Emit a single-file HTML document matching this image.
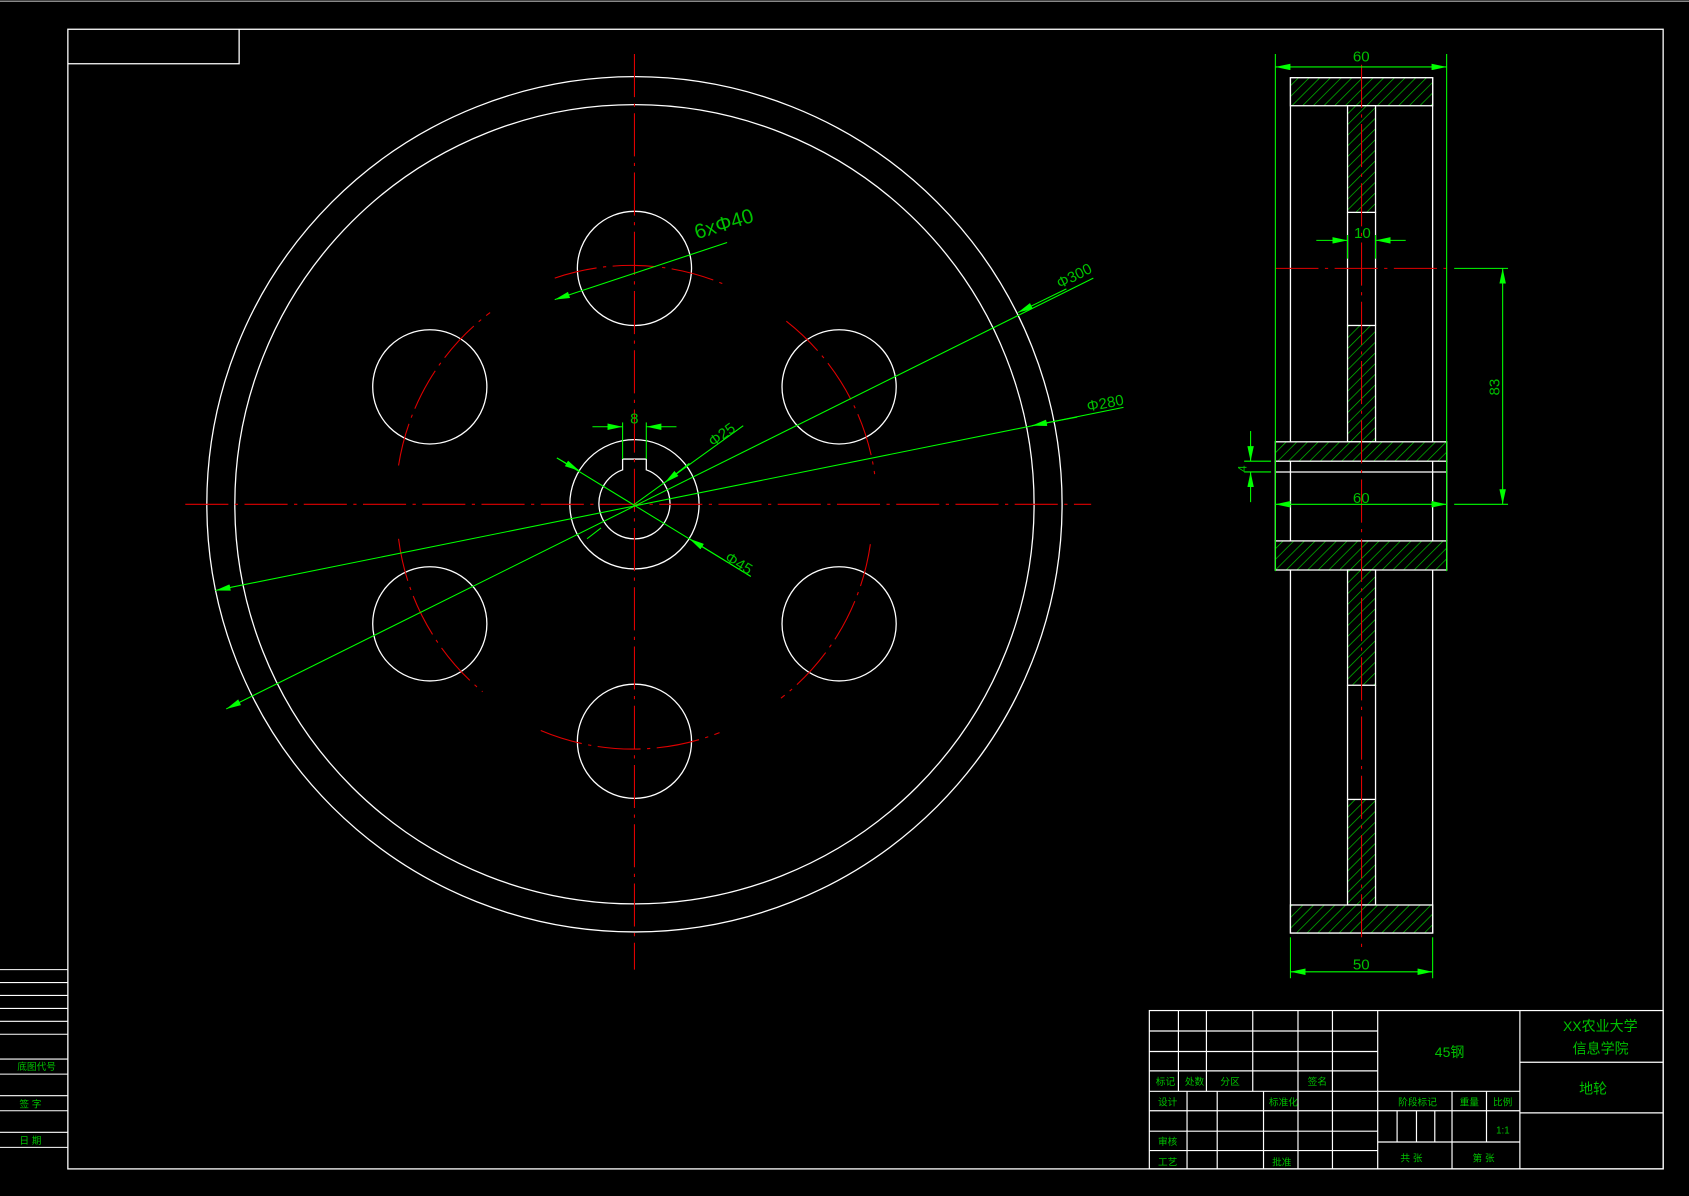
<!DOCTYPE html>
<html><head><meta charset="utf-8"><style>
html,body{margin:0;padding:0;background:#000;overflow:hidden}
svg{display:block}
text{font-family:"Liberation Sans","Noto Sans CJK SC",sans-serif;fill:#00c000}
</style></head><body>
<svg width="1689" height="1196" viewBox="0 0 1568 1110" xmlns="http://www.w3.org/2000/svg">
<defs>
<pattern id="h" patternUnits="userSpaceOnUse" width="7" height="7" patternTransform="rotate(45)">
<rect width="7" height="7" fill="#000"/><line x1="0" y1="0" x2="0" y2="7" stroke="#00c000" stroke-width="1.3"/>
</pattern>
<marker id="a" markerWidth="14" markerHeight="6" refX="14" refY="3" orient="auto-start-reverse" markerUnits="userSpaceOnUse"><path d="M0,0 L14,3 L0,6z" fill="#00ff00"/></marker>
</defs>
<rect x="0" y="0" width="1568" height="1110" fill="#000"/>
<line x1="0" y1="1" x2="1568" y2="1" stroke="#888" stroke-width="1.5"/>
<g stroke="#fff" fill="none" stroke-width="1.2">
<rect x="63" y="27" width="1481" height="1058"/>
<polyline points="63,59 222,59 222,27"/>
<g stroke-width="1">
<line x1="0" y1="900" x2="63" y2="900"/><line x1="0" y1="912" x2="63" y2="912"/><line x1="0" y1="924" x2="63" y2="924"/><line x1="0" y1="936" x2="63" y2="936"/><line x1="0" y1="948" x2="63" y2="948"/><line x1="0" y1="960" x2="63" y2="960"/>
<line x1="0" y1="983" x2="63" y2="983"/><line x1="0" y1="997" x2="63" y2="997"/><line x1="0" y1="1017" x2="63" y2="1017"/><line x1="0" y1="1031" x2="63" y2="1031"/><line x1="0" y1="1051" x2="63" y2="1051"/><line x1="0" y1="1065" x2="63" y2="1065"/>
</g>
<circle cx="589" cy="468" r="397"/>
<circle cx="589" cy="468" r="371"/>
<circle cx="589" cy="249" r="53"/><circle cx="589" cy="688" r="53"/>
<circle cx="399" cy="359" r="53"/><circle cx="779" cy="359" r="53"/>
<circle cx="399" cy="579" r="53"/><circle cx="779" cy="579" r="53"/>
<circle cx="589" cy="468" r="60"/>
<path d="M578,436 A33,33 0 1 0 600,436 L600,426 L578,426 Z"/>
<rect x="1198" y="72" width="132" height="794"/>
</g>
<g fill="url(#h)" stroke="#fff" stroke-width="1.2">
<rect x="1198" y="72" width="132" height="26"/>
<rect x="1251" y="98" width="26" height="99"/>
<rect x="1251" y="302" width="26" height="108"/>
<rect x="1184" y="410" width="159" height="18"/>
<rect x="1184" y="502" width="159" height="27"/>
<rect x="1251" y="529" width="26" height="107"/>
<rect x="1251" y="742" width="26" height="98"/>
<rect x="1198" y="840" width="132" height="26"/>
</g>
<g stroke="#fff" fill="none" stroke-width="1.2">
<line x1="1251" y1="197" x2="1251" y2="302"/><line x1="1277" y1="197" x2="1277" y2="302"/>
<line x1="1251" y1="636" x2="1251" y2="742"/><line x1="1277" y1="636" x2="1277" y2="742"/>
<line x1="1184" y1="438" x2="1343" y2="438"/>
<line x1="1184" y1="428" x2="1184" y2="502"/><line x1="1343" y1="428" x2="1343" y2="502"/>
</g>
<g stroke="#e00000" fill="none" stroke-width="1" stroke-dasharray="40,6,3,6">
<line x1="172" y1="468" x2="1013" y2="468"/>
<line x1="589" y1="50" x2="589" y2="900"/>
<line x1="1264" y1="60" x2="1264" y2="880"/>
<line x1="1184" y1="249" x2="1343" y2="249"/>
<path d="M515,258 A220,220 0 0 1 675,265"/>
<path d="M502,678 A220,220 0 0 0 668,680"/>
<path d="M370,432 A220,220 0 0 1 455,290"/>
<path d="M730,298 A220,220 0 0 1 812,440"/>
<path d="M370,500 A220,220 0 0 0 448,642"/>
<path d="M808,505 A220,220 0 0 1 725,648"/>
</g>
<g stroke="#00ff00" fill="none" stroke-width="1">
<line x1="515" y1="278" x2="675" y2="225" marker-start="url(#a)"/>
<line x1="210" y1="658" x2="1015" y2="258" marker-start="url(#a)"/>
<line x1="990" y1="268" x2="945" y2="290" marker-end="url(#a)"/>
<line x1="200" y1="548" x2="1043" y2="378" marker-start="url(#a)"/>
<line x1="1000" y1="387" x2="958" y2="395" marker-end="url(#a)"/>
<line x1="589" y1="468" x2="690" y2="395"/>
<line x1="640" y1="430" x2="617" y2="448" marker-end="url(#a)"/>
<line x1="558" y1="490" x2="545" y2="500"/>
<line x1="517" y1="425" x2="697" y2="535"/>
<line x1="517" y1="425" x2="538" y2="437" marker-end="url(#a)"/>
<line x1="697" y1="535" x2="640" y2="500" marker-end="url(#a)"/>
<line x1="578" y1="392" x2="578" y2="426"/><line x1="600" y1="392" x2="600" y2="426"/>
<line x1="550" y1="396" x2="578" y2="396" marker-end="url(#a)"/><line x1="628" y1="396" x2="600" y2="396" marker-end="url(#a)"/>
<line x1="1184" y1="50" x2="1184" y2="530"/><line x1="1343" y1="50" x2="1343" y2="530"/>
<line x1="1184" y1="62" x2="1343" y2="62" marker-start="url(#a)" marker-end="url(#a)"/>
<line x1="1184" y1="468" x2="1343" y2="468" marker-start="url(#a)" marker-end="url(#a)"/>
<line x1="1222" y1="223" x2="1251" y2="223" marker-end="url(#a)"/><line x1="1305" y1="223" x2="1277" y2="223" marker-end="url(#a)"/>
<line x1="1251" y1="218" x2="1251" y2="240"/><line x1="1277" y1="218" x2="1277" y2="240"/>
<line x1="1350" y1="249" x2="1400" y2="249"/><line x1="1350" y1="468" x2="1400" y2="468"/>
<line x1="1395" y1="249" x2="1395" y2="468" marker-start="url(#a)" marker-end="url(#a)"/>
<line x1="1155" y1="428" x2="1180" y2="428"/><line x1="1155" y1="438" x2="1180" y2="438"/>
<line x1="1161" y1="400" x2="1161" y2="428" marker-end="url(#a)"/><line x1="1161" y1="466" x2="1161" y2="438" marker-end="url(#a)"/>
<line x1="1198" y1="870" x2="1198" y2="908"/><line x1="1330" y1="870" x2="1330" y2="908"/>
<line x1="1198" y1="902" x2="1330" y2="902" marker-start="url(#a)" marker-end="url(#a)"/>
</g>
<g font-size="14">
<text x="647" y="222" font-size="19" transform="rotate(-17 647 222)">6xΦ40</text>
<text x="984" y="268" transform="rotate(-27 984 268)">Φ300</text>
<text x="1010" y="382" transform="rotate(-11 1010 382)">Φ280</text>
<text x="662" y="415" transform="rotate(-36 662 415)">Φ25</text>
<text x="672" y="520" transform="rotate(31 672 520)">Φ45</text>
<text x="585" y="393">8</text>
<text x="1256" y="57">60</text>
<text x="1257" y="221">10</text>
<text x="1256" y="467">60</text>
<text x="1256" y="900">50</text>
<text x="1392" y="367" transform="rotate(-90 1392 367)">83</text>
<text x="1157" y="438" font-size="11" transform="rotate(-90 1157 438)">4</text>
</g>
<g stroke="#fff" fill="none" stroke-width="1.1">
<rect x="1067" y="938" width="477" height="147"/>
<line x1="1067" y1="957" x2="1279" y2="957"/><line x1="1067" y1="976" x2="1279" y2="976"/><line x1="1067" y1="994" x2="1279" y2="994"/>
<line x1="1067" y1="1013" x2="1411" y2="1013"/><line x1="1067" y1="1031" x2="1279" y2="1031"/><line x1="1067" y1="1050" x2="1279" y2="1050"/><line x1="1067" y1="1068" x2="1279" y2="1068"/>
<line x1="1094" y1="938" x2="1094" y2="1013"/><line x1="1120" y1="938" x2="1120" y2="1013"/><line x1="1163" y1="938" x2="1163" y2="1013"/>
<line x1="1205" y1="938" x2="1205" y2="1085"/><line x1="1237" y1="938" x2="1237" y2="1085"/>
<line x1="1102" y1="1013" x2="1102" y2="1085"/><line x1="1130" y1="1013" x2="1130" y2="1085"/><line x1="1173" y1="1013" x2="1173" y2="1085"/>
<line x1="1279" y1="938" x2="1279" y2="1085"/><line x1="1411" y1="938" x2="1411" y2="1085"/>
<line x1="1411" y1="986" x2="1544" y2="986"/><line x1="1411" y1="1033" x2="1544" y2="1033"/>
<line x1="1279" y1="1031" x2="1411" y2="1031"/><line x1="1279" y1="1060" x2="1411" y2="1060"/>
<line x1="1348" y1="1013" x2="1348" y2="1085"/><line x1="1380" y1="1013" x2="1380" y2="1060"/>
<line x1="1297" y1="1031" x2="1297" y2="1060"/><line x1="1315" y1="1031" x2="1315" y2="1060"/><line x1="1332" y1="1031" x2="1332" y2="1060"/>
</g>
<g font-size="9">
<text x="1073" y="1007">标记</text><text x="1100" y="1007">处数</text><text x="1133" y="1007">分区</text><text x="1214" y="1007">签名</text>
<text x="1075" y="1026">设计</text><text x="1178" y="1026">标准化</text>
<text x="1075" y="1063">审核</text><text x="1075" y="1082">工艺</text><text x="1181" y="1082">批准</text>
<text x="1298" y="1026">阶段标记</text><text x="1355" y="1026">重量</text><text x="1386" y="1026">比例</text>
<text x="1389" y="1052">1:1</text>
<text x="1300" y="1078">共 张</text><text x="1367" y="1078">第 张</text>
<text x="16" y="993">底图代号</text><text x="18" y="1028">签 字</text><text x="18" y="1062">日 期</text>
</g>
<g font-size="13">
<text x="1332" y="981">45钢</text>
<text x="1451" y="957">XX农业大学</text>
<text x="1460" y="978">信息学院</text>
<text x="1466" y="1015">地轮</text>
</g>
</svg>
</body></html>
